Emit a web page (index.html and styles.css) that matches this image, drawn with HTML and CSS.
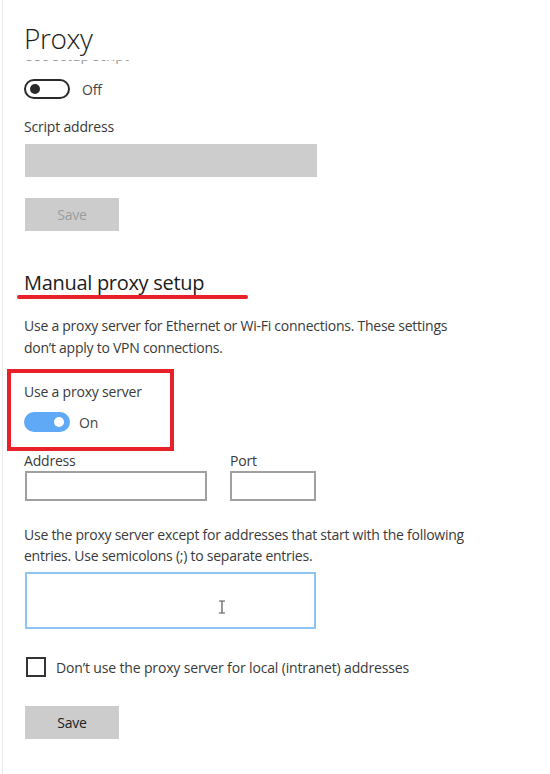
FILE: index.html
```html
<!DOCTYPE html>
<html lang="en">
<head>
    <meta charset="UTF-8">
    <meta name="viewport" content="width=device-width, initial-scale=1.0">
    <title>Proxy</title>
    <link rel="stylesheet" href="styles.css">
</head>
<body>
    <div class="page">
        <h1 class="title">Proxy</h1>
        <div class="clipped"><span>Use setup script</span></div>

        <div class="toggle-row">
            <span class="toggle off"><span class="knob"></span></span>
            <span class="toggle-text">Off</span>
        </div>

        <div class="label script-label">Script address</div>
        <div class="input script-input"></div>
        <button class="button top-save" disabled>Save</button>

        <h2 class="section">Manual proxy setup</h2>
        <div class="marker"></div>

        <p class="desc intro">Use a proxy server for Ethernet or Wi-Fi connections. These settings don’t apply to VPN connections.</p>

        <div class="highlight">
            <div class="label">Use a proxy server</div>
            <div class="toggle-row on-row">
                <span class="toggle on"><span class="knob"></span></span>
                <span class="toggle-text">On</span>
            </div>
        </div>

        <div class="fields">
            <div class="field">
                <div class="label">Address</div>
                <div class="input address"></div>
            </div>
            <div class="field">
                <div class="label">Port</div>
                <div class="input port"></div>
            </div>
        </div>

        <p class="desc except">Use the proxy server except for addresses that start with the following entries. Use semicolons (;) to separate entries.</p>
        <div class="input exceptions">
            <svg class="ibeam" width="8" height="14" viewBox="0 0 8 14">
                <path d="M1 1h6M4 1v12M1 13h6" stroke="#555" stroke-width="1.2" fill="none"/>
            </svg>
        </div>

        <label class="check">
            <span class="box"></span>
            <span>Don’t use the proxy server for local (intranet) addresses</span>
        </label>

        <button class="button bottom-save">Save</button>
    </div>
</body>
</html>
```

FILE: styles.css
```css
body {
    margin: 0;
    background-color: #fff;
    color: #2b2b2b;
    font-family: 'Open Sans', 'Noto Sans', sans-serif;
}

.page {
    margin-left: 2px;
    border-left: 1px solid #ececec;
    padding: 20px 0 0 21px;
    min-height: 774px;
    box-sizing: border-box;
}

.title {
    margin: 0;
    font-size: 28px;
    font-weight: 300;
    line-height: 36px;
    color: #1c1c1c;
    letter-spacing: -0.4px;
}

.clipped {
    height: 4px;
    margin-top: 4px;
    overflow: hidden;
    color: #999;
    font-size: 14px;
}

.clipped span {
    display: block;
    line-height: 16px;
    margin-top: -12px;
}

.toggle-row {
    display: flex;
    align-items: center;
    margin-top: 15px;
    height: 20px;
}

.toggle {
    display: flex;
    align-items: center;
    width: 46px;
    height: 20px;
    border-radius: 10px;
    box-sizing: border-box;
    padding: 0 4px;
}

.toggle .knob {
    width: 10px;
    height: 10px;
    border-radius: 50%;
}

.toggle.off {
    border: 2px solid #2a2a2a;
}

.toggle.off .knob {
    background-color: #2a2a2a;
}

.toggle.on {
    background-color: #60a9f6;
    justify-content: flex-end;
    padding: 0 6px;
}

.toggle.on .knob {
    background-color: #fff;
}

.toggle-text {
    margin-left: 12px;
    font-size: 14px;
    color: #444;
    letter-spacing: -0.2px;
}

.on-row .toggle-text {
    margin-left: 9px;
}

.label {
    font-size: 14px;
    line-height: 20px;
    color: #3a3a3a;
    letter-spacing: -0.2px;
}

.script-label {
    margin-top: 18px;
}

.input {
    box-sizing: border-box;
    border: 2px solid #a0a0a0;
    background-color: #fff;
}

.script-input {
    margin-top: 7px;
    margin-left: 1px;
    width: 292px;
    height: 33px;
    border: none;
    background-color: #cdcdcd;
}

.button {
    display: block;
    width: 94px;
    height: 33px;
    margin-left: 1px;
    border: none;
    background-color: #cccccc;
    font-family: 'Open Sans', 'Noto Sans', sans-serif;
    font-size: 14px;
    color: #222;
    letter-spacing: -0.2px;
    padding: 0;
}

.button:disabled {
    color: #9c9c9c;
}

.top-save {
    margin-top: 21px;
}

.section {
    margin: 39px 0 0 0;
    font-size: 20px;
    font-weight: 400;
    line-height: 26px;
    color: #1c1c1c;
    letter-spacing: -0.3px;
}

.marker {
    width: 231px;
    height: 4px;
    margin: -1px 0 0 -7px;
    border-radius: 2px;
    background-color: #e8202a;
}

.desc {
    margin: 16px 0 0 0;
    width: 450px;
    font-size: 14px;
    line-height: 22px;
    color: #3a3a3a;
    letter-spacing: -0.25px;
}

.highlight {
    width: 167px;
    margin: 10px 0 0 -17px;
    border: 4px solid #e8202a;
    box-sizing: border-box;
    padding: 9px 0 15px 13px;
}

.highlight .toggle-row {
    margin-top: 10px;
}

.fields {
    display: flex;
    gap: 23px;
}

.address {
    width: 182px;
    height: 30px;
    margin-left: 1px;
}

.port {
    width: 86px;
    height: 30px;
}

.except {
    margin-top: 23px;
    line-height: 21px;
}

.exceptions {
    display: flex;
    align-items: flex-end;
    margin-top: 6px;
    margin-left: 1px;
    width: 291px;
    height: 57px;
    border-color: #8fc3f4;
    padding: 0 0 13px 191px;
}

.check {
    display: flex;
    align-items: center;
    margin-top: 28px;
    height: 20px;
    font-size: 14px;
    color: #3a3a3a;
    letter-spacing: -0.15px;
}

.check .box {
    width: 20px;
    height: 20px;
    margin: 0 10px 0 2px;
    border: 2px solid #333;
    box-sizing: border-box;
}

.bottom-save {
    margin-top: 29px;
}
```
